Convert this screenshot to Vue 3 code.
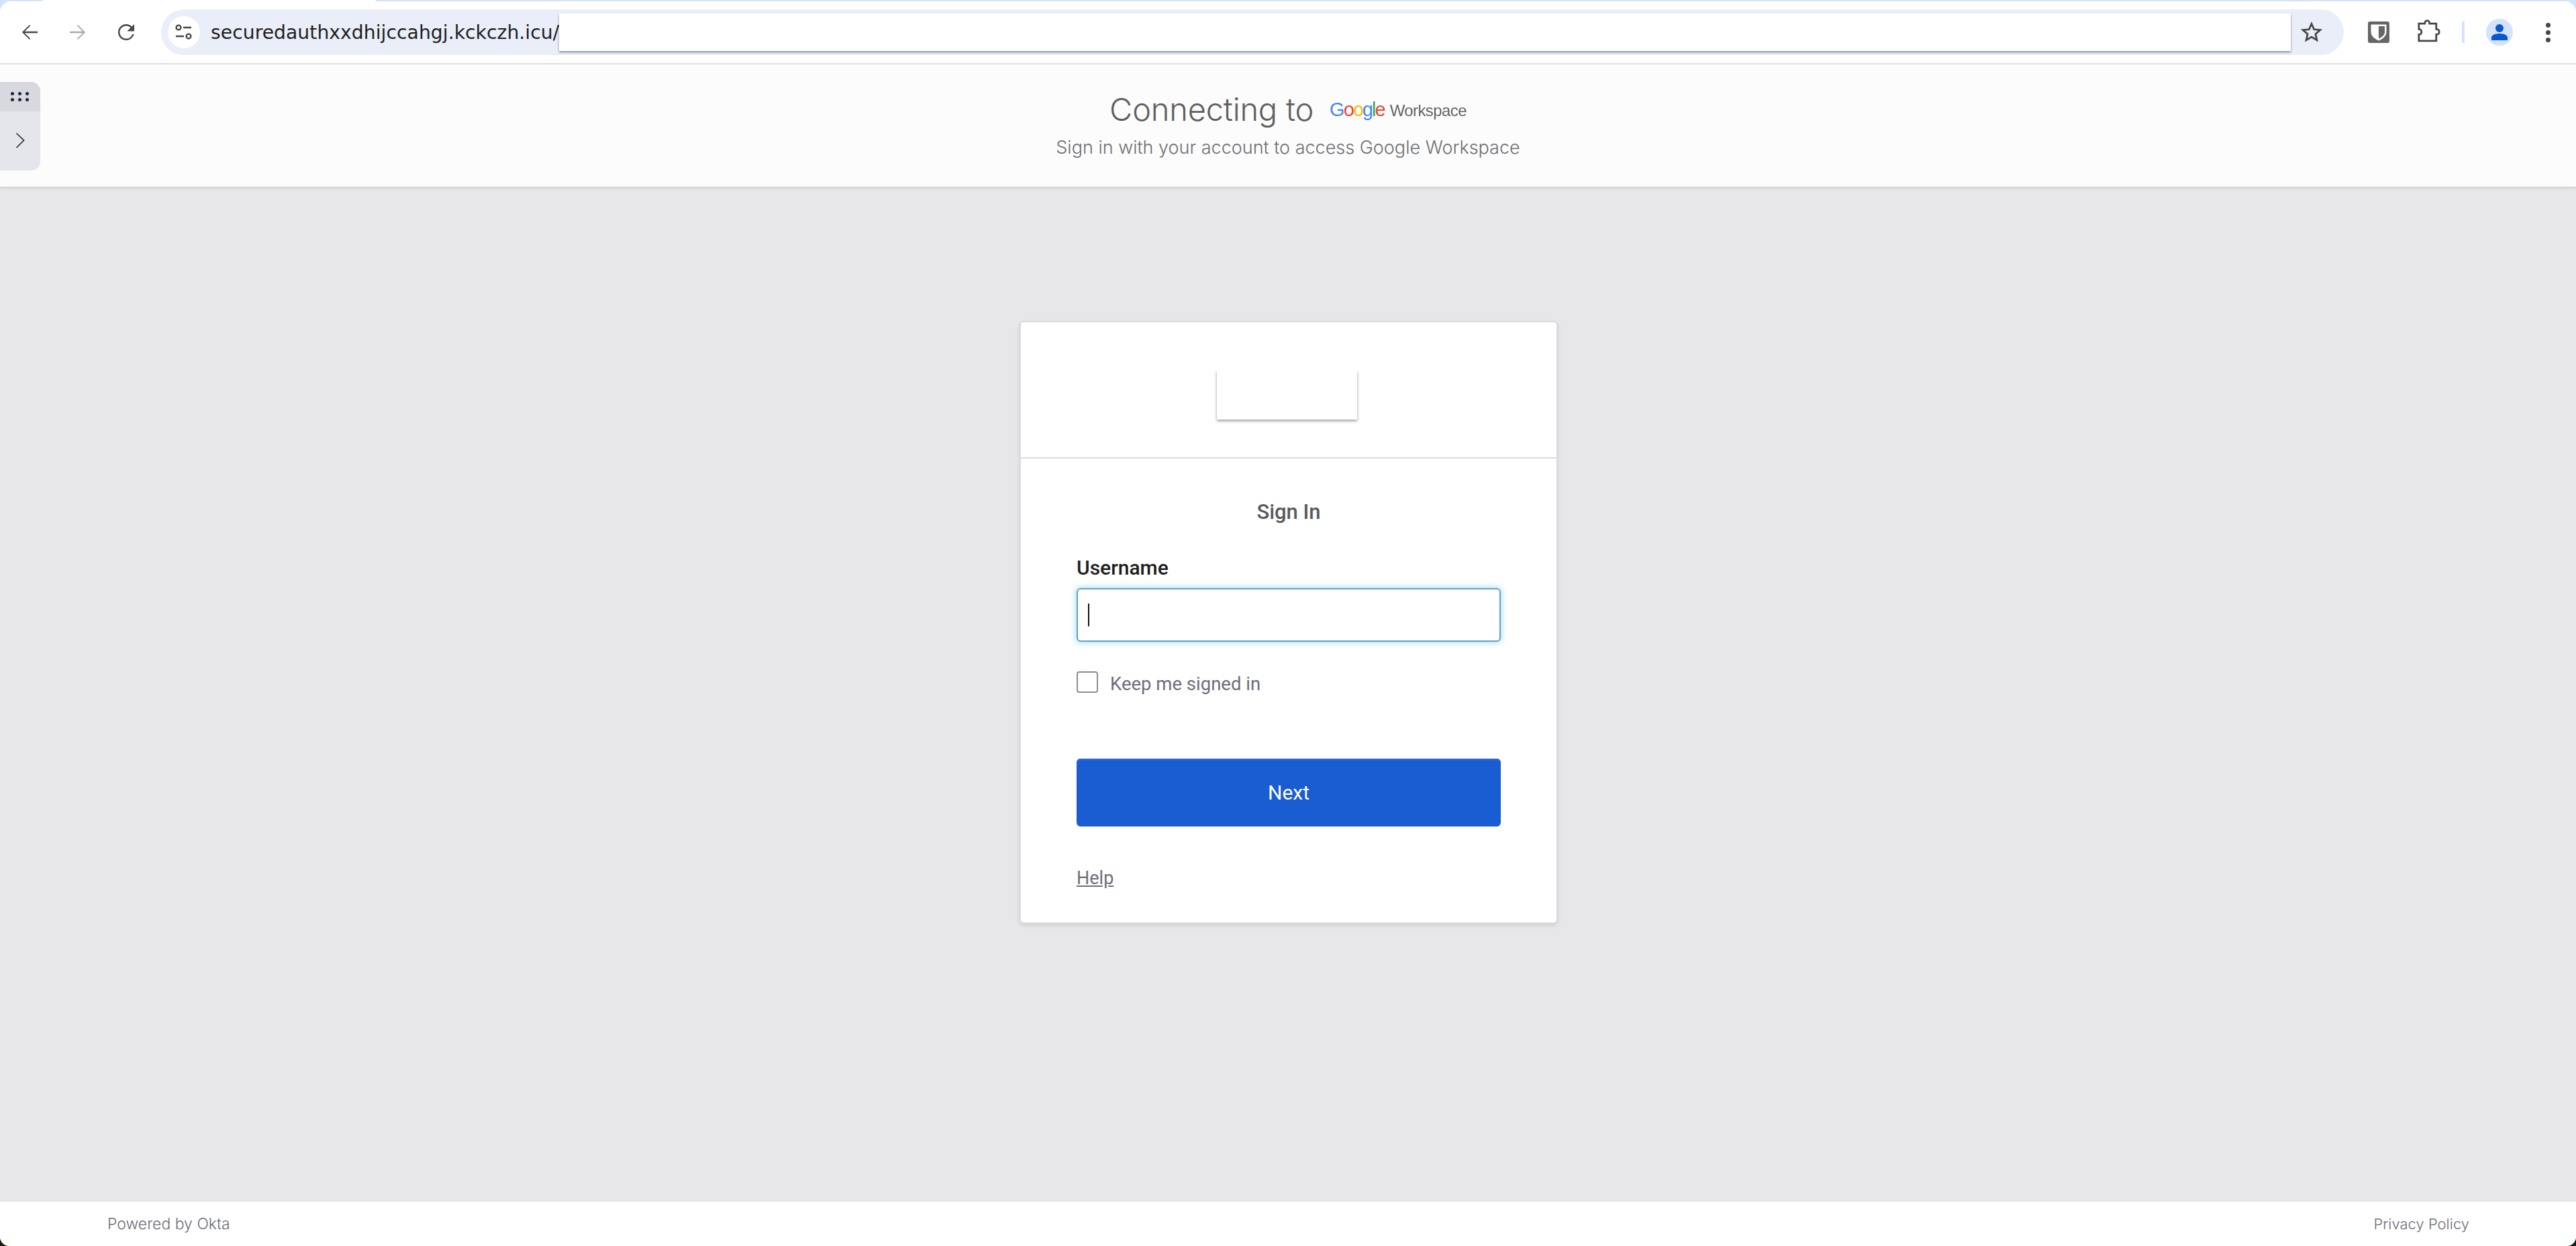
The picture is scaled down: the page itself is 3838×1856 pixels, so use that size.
<script setup>
const dots = [0, 1, 2, 3, 4, 5]
</script>

<template>
  <div class="frame">
    <div class="strip"><span class="strip-tab"></span></div>
    <header class="toolbar">
      <button class="nav">
        <svg viewBox="0 0 24 24" width="36" height="36"><path d="M20 11.200H7.200l5.600-5.600L12 4.600 4.600 12l7.400 7.400.8-1-5.600-5.600H20z" fill="#474747" /></svg>
      </button>
      <button class="nav">
        <svg viewBox="0 0 24 24" width="36" height="36"><path d="M4 11.200h12.800l-5.600-5.600.8-1 7.400 7.400-7.400 7.400-.8-1 5.600-5.600H4z" fill="#a9a9a9" /></svg>
      </button>
      <button class="nav">
        <svg viewBox="0 0 24 24" width="36" height="36"><path d="M17.650 6.350A7.958 7.958 0 0 0 12 4c-4.420 0-7.990 3.580-7.990 8s3.570 8 7.990 8c3.730 0 6.840-2.550 7.730-6h-1.700A6.300 6.300 0 0 1 12 18.400c-3.500 0-6.400-2.900-6.400-6.400S8.500 5.600 12 5.600c1.760 0 3.300.73 4.420 1.880L13 11h7V4l-2.350 2.350z" fill="#474747" /></svg>
      </button>
      <div class="omnibox">
        <span class="tune">
          <svg viewBox="0 0 26 24" width="26" height="24" fill="none" stroke="#474747" stroke-width="2.400">
            <circle cx="5" cy="5" r="3.400" />
            <path d="M12 5h12M1 18h12" />
            <circle cx="20" cy="18" r="3.400" />
          </svg>
        </span>
        <span class="url">securedauthxxdhijccahgj.kckczh.icu/</span>
        <span class="url-cover"></span>
        <svg class="star" viewBox="0 0 32 32" width="32" height="32"><path d="M16 3.500l3.700 8.300 9 .9-6.800 6 2 8.900-7.900-4.600-7.900 4.600 2-8.900-6.800-6 9-.9z" fill="none" stroke="#474747" stroke-width="2.800" stroke-linejoin="miter" /></svg>
      </div>
      <div class="actions">
        <svg class="shield" viewBox="0 0 32 32" width="32" height="32">
          <rect width="32" height="32" rx="3" fill="#666" />
          <path d="M4.500 4.500h23v11c0 6.500-5.500 10.500-11.500 13-6-2.500-11.500-6.500-11.500-13z" fill="#fff" />
          <path d="M16 7h9v9c0 4.500-4.500 7.500-9 9.500z" fill="#666" />
        </svg>
        <svg class="puzzle" viewBox="0 0 34 34" width="40" height="40"><path d="M5 6h7.500c0-5 6-5 6 0H27v7c5 0 5 7 0 7v8H5v-8c4.500 0 4.500-7 0-7z" fill="none" stroke="#474747" stroke-width="2.400" stroke-linejoin="miter" /></svg>
        <span class="sep"></span>
        <span class="avatar">
          <svg viewBox="0 0 40 40" width="40" height="40">
            <circle cx="20" cy="14" r="6" fill="#0b57d0" />
            <path d="M8 32v-4c0-4 6-6 12-6s12 2 12 6v4z" fill="#0b57d0" />
          </svg>
        </span>
        <span class="menu"><i></i><i></i><i></i></span>
      </div>
    </header>

    <div class="page">
      <aside class="side-tab">
        <div class="side-top">
          <span class="grid"><i v-for="d in dots" :key="d"></i></span>
        </div>
        <div class="side-bottom">
          <svg viewBox="0 0 14 24" width="14" height="24"><path d="M1.500 1.500 12.500 12 1.500 23" fill="none" stroke="#1d2a44" stroke-width="1.700" /></svg>
        </div>
      </aside>

      <section class="banner">
        <div class="title-row">
          <h1>Connecting to</h1>
          <span class="brand">
            <span class="g-word"><b class="blue">G</b><b class="red">o</b><b class="yellow">o</b><b class="blue">g</b><b class="green">l</b><b class="red">e</b></span>
            <span class="w-word">Workspace</span>
          </span>
        </div>
        <p>Sign in with your account to access Google Workspace</p>
      </section>

      <main class="stage">
        <div class="card">
          <div class="card-head"><div class="logo"></div></div>
          <form class="card-body" @submit.prevent>
            <h2>Sign In</h2>
            <label class="field-label">Username</label>
            <div class="input"><span class="caret"></span></div>
            <label class="keep"><span class="box"></span><span class="keep-text">Keep me signed in</span></label>
            <button class="next" type="button">Next</button>
            <a class="help">Help</a>
          </form>
        </div>
      </main>

      <footer class="foot">
        <span>Powered by Okta</span>
        <span class="privacy">Privacy Policy</span>
      </footer>
    </div>
  </div>
</template>

<style>
html, body { margin: 0; background: #14210f; }
</style>

<style scoped>
.frame {
  width: 3838px;
  height: 1856px;
  display: flex;
  flex-direction: column;
  background: linear-gradient(#d3e3fd 0, #d3e3fd 40px, #14210f 40px);
  overflow: hidden;
  font-family: Inter, "Liberation Sans", sans-serif;
}
.strip { height: 2px; flex: none; position: relative; }
.strip-tab { display: block; width: 496px; height: 2px; margin-left: 64px; background: #fff; }
.toolbar {
  height: 92px;
  flex: none;
  box-sizing: border-box;
  background: #fff;
  border-radius: 16px 16px 0 0;
  display: flex;
  align-items: flex-start;
  padding: 12px 0 0 26px;
}
.nav {
  width: 36px;
  height: 68px;
  margin-right: 36px;
  padding: 0;
  border: 0;
  background: none;
  display: flex;
  align-items: center;
  justify-content: center;
}
.omnibox {
  width: 3252px;
  height: 68px;
  margin-left: -2px;
  flex: none;
  box-sizing: border-box;
  background: #e9eef8;
  border-radius: 34px;
  display: flex;
  align-items: center;
  padding-left: 10px;
}
.tune {
  width: 48px;
  height: 48px;
  border-radius: 50%;
  background: #fff;
  display: flex;
  align-items: center;
  justify-content: center;
  flex: none;
}
.url {
  margin-left: 16px;
  width: 519px;
  flex: none;
  white-space: nowrap;
  font-family: "DejaVu Sans", sans-serif;
  font-size: 28.3px;
  color: #1f1f1f;
}
.url-cover {
  width: 2580px;
  height: 56px;
  flex: none;
  background: #fff;
  box-shadow: 0 2px 3px rgba(60, 64, 80, .55);
}
.star { margin-left: 15px; flex: none; }
.actions { flex: 1; position: relative; height: 68px; display: flex; align-items: center; }
.shield { margin-left: 36px; flex: none; }
.puzzle { margin-left: 38px; flex: none; }
.sep { width: 4px; height: 32px; margin-left: 30px; background: #d3e3fd; flex: none; }
.avatar { width: 40px; height: 40px; margin-left: 32px; border-radius: 50%; background: #d3e3fd; overflow: hidden; flex: none; display: flex; }
.menu { margin-left: 49px; display: flex; flex-direction: column; gap: 4px; }
.menu i { width: 7px; height: 7px; border-radius: 50%; background: #474747; display: block; }

.page {
  flex: 1;
  min-height: 0;
  position: relative;
  display: flex;
  flex-direction: column;
  border-top: 2px solid #e0e0e0;
  background: #e7e7e9;
  border-radius: 0 0 14px 14px;
  overflow: hidden;
}
.side-tab {
  position: absolute;
  left: 0;
  top: 26px;
  width: 60px;
  height: 132px;
  border-radius: 0 14px 14px 0;
  overflow: hidden;
  background: #e5e6eb;
  z-index: 2;
  display: flex;
  flex-direction: column;
}
.side-top { height: 44px; background: #d8d9de; display: flex; align-items: center; justify-content: center; }
.grid { display: grid; grid-template-columns: repeat(3, 5px); gap: 4px 6px; margin-left: -1px; }
.grid i { width: 5px; height: 5px; border-radius: 50%; background: #1d2a44; display: block; }
.side-bottom { flex: 1; display: flex; align-items: center; justify-content: center; padding-bottom: 2px; }

.banner {
  height: 182px;
  flex: none;
  box-sizing: border-box;
  background: #fcfcfc;
  box-shadow: 0 2px 4px rgba(0, 0, 0, .12);
  padding-top: 34px;
  text-align: center;
  position: relative;
  z-index: 1;
}
.title-row { display: flex; justify-content: center; align-items: center; height: 66px; }
h1 { margin: 0; font-size: 47px; font-weight: 300; color: #5f5f5f; line-height: 66px; letter-spacing: -.2px; }
.brand { margin-left: 24px; display: flex; align-items: baseline; gap: 8px; filter: blur(.5px); }
.g-word { font-family: "Liberation Sans", sans-serif; font-size: 29px; letter-spacing: -2px; }
.g-word b { font-weight: 400; }
.blue { color: #4285f4; }
.red { color: #ea4335; }
.yellow { color: #fbbc05; }
.green { color: #34a853; }
.w-word { font-family: "Liberation Sans", sans-serif; font-size: 24px; color: #5f6368; letter-spacing: -.6px; }
.banner p { margin: 4px 0 0; font-size: 27px; line-height: 40px; color: #6e6e72; font-weight: 300; }

.stage { flex: 1; min-height: 0; display: flex; justify-content: center; align-items: flex-start; padding-top: 200px; margin-left: 2px; }
.card {
  width: 802px;
  height: 898px;
  box-sizing: border-box;
  background: #fff;
  border: 2px solid #dadadc;
  border-radius: 6px;
  box-shadow: 0 3px 6px rgba(0, 0, 0, .1);
}
.card-head { height: 203px; box-sizing: border-box; padding-top: 72px; border-bottom: 2px solid #dcdcdc; display: flex; justify-content: center; }
.logo { width: 209px; height: 73px; background: #fff; box-shadow: 0 2px 4px rgba(0, 0, 0, .42); margin-right: 5px; clip-path: inset(0 -8px -8px -8px); }
.card-body {
  padding: 0 83px;
  display: flex;
  flex-direction: column;
  font-family: Roboto, "Liberation Sans", sans-serif;
}
h2 { margin: 62px 0 0; text-align: center; font-size: 31px; line-height: 36px; font-weight: 500; color: #5a5a5f; }
.field-label { margin-top: 47px; font-size: 30px; line-height: 36px; font-weight: 500; color: #1d1d21; }
.input {
  margin-top: 12px;
  height: 80px;
  box-sizing: border-box;
  border: 2px solid #6a9fbc;
  border-radius: 6px;
  background: #fff;
  box-shadow: 0 0 10px 1px rgba(90, 200, 240, .6);
  display: flex;
  align-items: center;
  padding-left: 15px;
}
.caret { width: 2px; height: 34px; background: #111; display: block; }
.keep { margin-top: 44px; height: 32px; display: flex; align-items: center; gap: 18px; font-size: 27.5px; color: #6e6e78; }
.keep-text { padding-top: 4px; }
.box { width: 32px; height: 32px; box-sizing: border-box; border: 2px solid #8c8c96; border-radius: 4px; background: #fff; flex: none; }
.next {
  margin-top: 98px;
  height: 101px;
  border: 0;
  border-radius: 6px;
  background: #1a5cd1;
  box-shadow: inset 0 3px 0 #2a66d6, 0 1px 1px rgba(0, 0, 0, .12);
  color: #fff;
  font-family: Roboto, "Liberation Sans", sans-serif;
  font-size: 30px;
  font-weight: 400;
}
.help { margin-top: 61px; align-self: flex-start; font-size: 27px; line-height: 32px; color: #6e6e78; text-decoration: underline; }

.foot {
  height: 66px;
  flex: none;
  box-sizing: border-box;
  background: #fff;
  display: flex;
  justify-content: space-between;
  align-items: center;
  padding: 0 159px 1px 160px;
  font-size: 23px;
  font-weight: 300;
  color: #6e6e78;
}
.privacy { font-size: 22px; }
</style>
